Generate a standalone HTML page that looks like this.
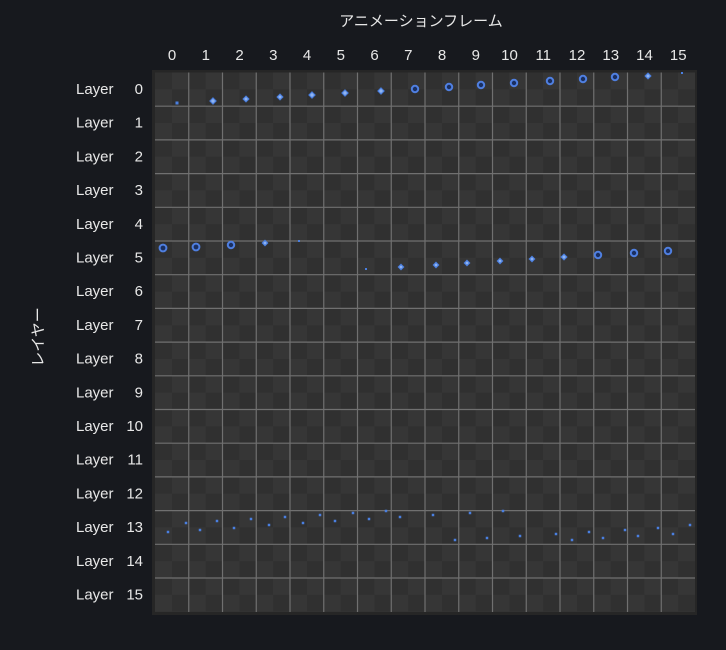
<!DOCTYPE html>
<html><head><meta charset="utf-8"><style>
body{margin:0;background:#17191e;width:726px;height:645px;overflow:hidden;font-family:"Liberation Sans","Noto Sans CJK JP",sans-serif;}
</style></head><body>
<svg width="726" height="645" xmlns="http://www.w3.org/2000/svg" font-family="Liberation Sans, Noto Sans CJK JP, sans-serif">
<defs>
<pattern id="ck" x="155" y="72.5" width="33.75" height="33.7" patternUnits="userSpaceOnUse">
<rect width="33.75" height="33.7" fill="#303030"/>
<rect x="16.9" width="16.9" height="16.85" fill="#363636"/>
<rect y="16.85" width="16.9" height="16.85" fill="#363636"/>
</pattern>
</defs>
<rect x="152" y="70" width="545" height="545" fill="#262626"/>
<rect x="155" y="72.5" width="540" height="539.5" fill="url(#ck)"/>
<g stroke="#707070" stroke-width="1.2" id="grid"></g>
<text x="421" y="26" fill="#e8e8e8" font-size="15" text-anchor="middle">アニメーションフレーム</text>
<text transform="translate(43,337) rotate(-90)" fill="#e8e8e8" font-size="15" text-anchor="middle">レイヤー</text>
<g id="lab" fill="#e8e8e8" font-size="15"></g>
<g id="dots"></g>
</svg>
<script>
var ns="http://www.w3.org/2000/svg";
function el(t,a,p){var e=document.createElementNS(ns,t);for(var k in a)e.setAttribute(k,a[k]);document.getElementById(p).appendChild(e);return e;}
for(var i=1;i<16;i++){var x=155+i*33.75;el("line",{x1:x,x2:x,y1:72.5,y2:612},"grid");var y=72.5+i*33.7;el("line",{x1:155,x2:695,y1:y,y2:y},"grid");}
for(var i=0;i<16;i++){var t=el("text",{x:172+i*33.75,y:60,"text-anchor":"middle"},"lab");t.textContent=i;
var t2=el("text",{x:76,y:94+i*33.7},"lab");t2.textContent="Layer";
var t3=el("text",{x:143,y:94+i*33.7,"text-anchor":"end"},"lab");t3.textContent=i;}
function ring(x,y,r){el("circle",{cx:x,cy:y,r:r,fill:"#1a2f60",stroke:"#4f7fe0","stroke-width":2},"dots");}
function dia(x,y,r){el("path",{d:"M"+x+","+(y-r)+"L"+(x+r)+","+y+"L"+x+","+(y+r)+"L"+(x-r)+","+y+"Z",fill:"#8fb4f0",stroke:"#4a7fe0","stroke-width":1.2},"dots");}
function sq(x,y,s){el("rect",{x:x-s/2,y:y-s/2,width:s,height:s,fill:"#4a7fe0"},"dots");}
sq(177,103,3);dia(213,101,3);dia(246,99,2.8);dia(280,97,2.8);dia(312,95,3);dia(345,93,3);dia(381,91,3);
ring(415,89,3.2);ring(449,87,3.2);ring(481,85,3.2);ring(514,83,3.2);ring(550,81,3.2);ring(583,79,3.2);ring(615,77,3.2);dia(648,76,2.8);sq(682,73,2);
ring(163,248,3.4);ring(196,247,3.4);ring(231,245,3.2);dia(265,243,2.6);sq(299,241,2);
sq(366,269,2);dia(401,267,2.6);dia(436,265,2.6);dia(467,263,2.6);dia(500,261,2.6);dia(532,259,2.6);dia(564,257,2.8);ring(598,255,3.2);ring(634,253,3.2);ring(668,251,3.2);
[[168,532],[186,523],[200,530],[217,521],[234,528],[251,519],[269,525],[285,517],[303,523],[320,515],[335,521],[353,513],[369,519],[386,511],[400,517],[433,515],[455,540],[470,513],[487,538],[503,511],[520,536],[556,534],[572,540],[589,532],[603,538],[625,530],[638,536],[658,528],[673,534],[690,525]].forEach(function(p){sq(p[0],p[1],2.5);});
</script>
</body></html>
